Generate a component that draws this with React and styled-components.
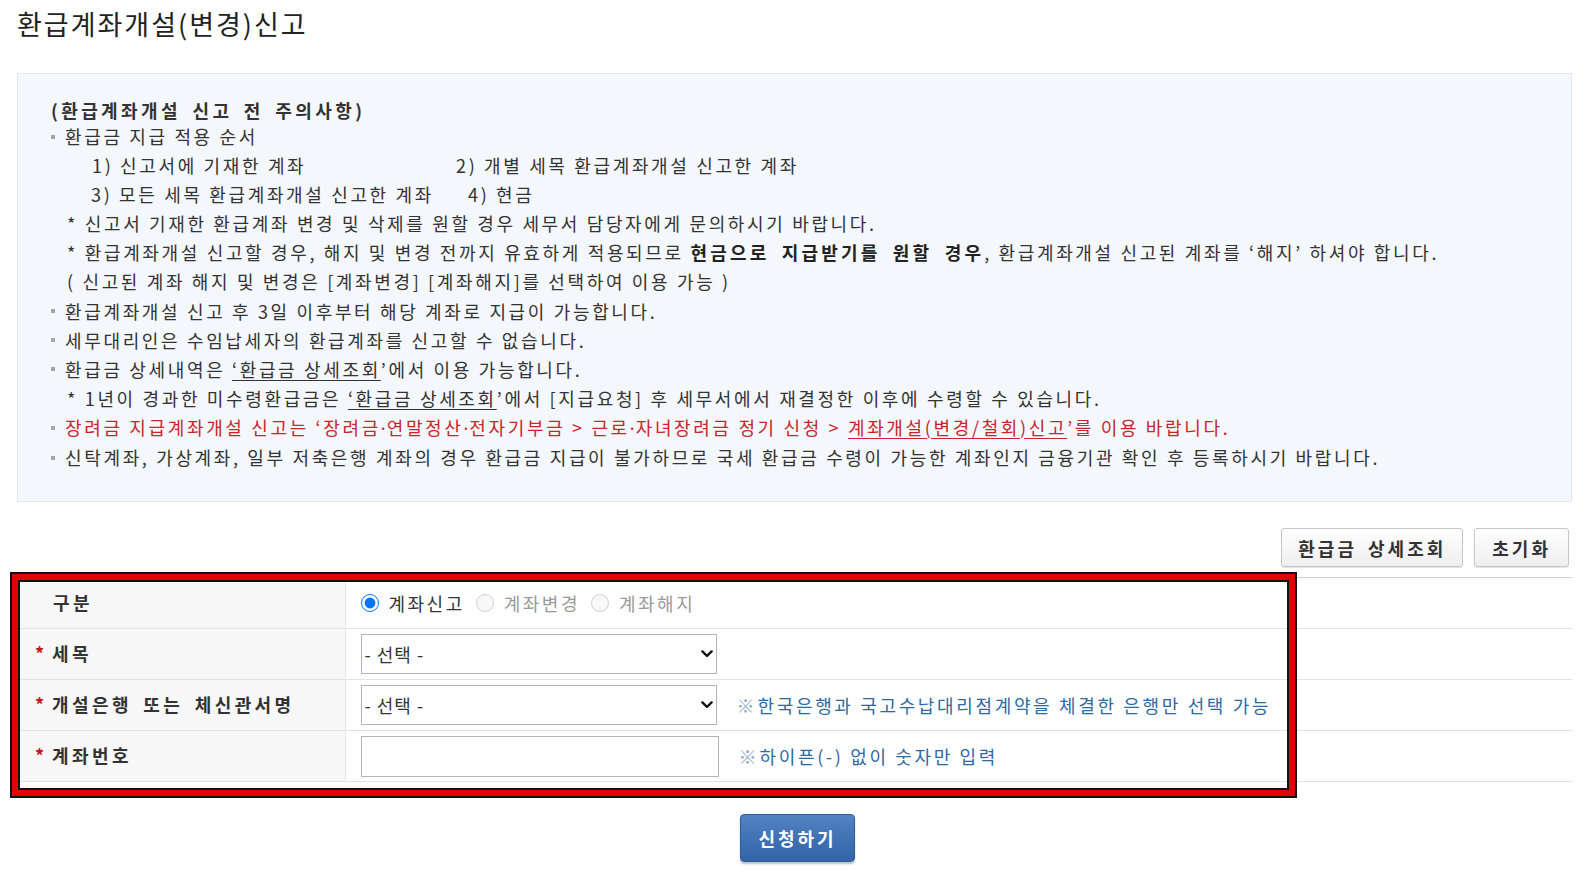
import React from "react";
import styled, { createGlobalStyle } from "styled-components";

const GlobalStyle = createGlobalStyle`
  html, body { margin: 0; padding: 0; background: #fff; }
  body {
    font-family: "Noto Sans CJK KR", "Noto Sans", sans-serif;
    color: #333;
  }
  * { box-sizing: border-box; }
`;

const Page = styled.div`
  width: 1586px;
  padding: 7px 14px 20px 17px;
`;

const Title = styled.h1`
  margin: 0 0 32px;
  font-size: 27px;
  font-weight: 400;
  line-height: 34px;
  letter-spacing: 2px;
  color: #222;
`;

const Notice = styled.section`
  background: #f4f7fb;
  border: 1px solid #e3e8ef;
  padding: 25px 30px 29px 33px;
`;

const NoticeTitle = styled.div`
  font-size: 18px;
  font-weight: 700;
  letter-spacing: 3.4px;
  word-spacing: 4px;
  line-height: 23px;
  color: #333;
`;

const List = styled.ul`
  margin: 0;
  padding: 0;
  list-style: none;
`;

const Item = styled.li`
  font-size: 18px;
  letter-spacing: 2.65px;
  line-height: 29.1px;
  white-space: nowrap;
  color: ${(p) => (p.$red ? "#c9252c" : "#333")};
  padding-left: ${(p) => p.$indent || 0}px;
  display: flex;
  align-items: center;

  &::before {
    content: "";
    display: ${(p) => (p.$bullet ? "inline-block" : "none")};
    width: 4px;
    height: 4px;
    background: #a6a6a6;
    margin-right: 10px;
    flex: none;
  }
`;

const Cell = styled.span`
  display: inline-block;
  width: ${(p) => (p.$w ? `${p.$w}px` : "auto")};
  flex: none;
`;

const Strong = styled.b`
  font-weight: 700;
  letter-spacing: 3.2px;
  word-spacing: 5px;
  color: #222;
`;

const Dot = styled.span`
  font-family: "Noto Sans", sans-serif;
  letter-spacing: 1px;
`;

const Link = styled.span`
  text-decoration: underline;
  text-underline-offset: 3px;
`;

const Toolbar = styled.div`
  display: flex;
  justify-content: flex-end;
  gap: 11px;
  margin-top: 26px;
  padding-right: 3px;
`;

const GrayButton = styled.button`
  height: 39px;
  padding: 0 ${(p) => p.$pad || 18}px;
  border: 1px solid #c6c6c6;
  border-radius: 3px;
  background: linear-gradient(#ffffff, #eeeeee);
  box-shadow: 0 1px 1px rgba(0, 0, 0, 0.12);
  font-family: inherit;
  font-size: 18px;
  font-weight: 700;
  letter-spacing: 3px;
  word-spacing: 4px;
  color: #333;
  cursor: pointer;
`;

const TableWrap = styled.div`
  position: relative;
  margin-top: 10px;
`;

const Table = styled.table`
  width: 100%;
  border-collapse: collapse;
  border-top: 1px solid #d2d2d2;
`;

const Row = styled.tr`
  height: 51px;
  border-bottom: 1px solid #e2e2e2;
`;

const Label = styled.th`
  width: 328px;
  background: #f7f7f7;
  border-right: 1px solid #e8e8e8;
  text-align: left;
  padding: 0 0 3px ${(p) => (p.$req ? 18 : 36)}px;
  font-size: 18px;
  font-weight: 700;
  letter-spacing: 3.4px;
  word-spacing: 4px;
  color: #333;
  white-space: nowrap;
`;

const Star = styled.span`
  display: inline-block;
  width: 17px;
  color: #c4161c;
  letter-spacing: 0;
`;

const Value = styled.td`
  padding: 0 0 0 15px;
`;

const Inline = styled.div`
  display: flex;
  align-items: center;
  gap: ${(p) => p.$gap || 20}px;
`;

const RadioLabel = styled.label`
  display: flex;
  align-items: center;
  gap: 10px;
  font-size: 18px;
  letter-spacing: 2.5px;
  color: ${(p) => (p.$disabled ? "#9a9a9a" : "#333")};
`;

const Radio = styled.input`
  width: 18px;
  height: 18px;
  margin: 0;
`;

const SelectBox = styled.span`
  position: relative;
  display: inline-block;
  width: 356px;
  height: 40px;
`;

const Select = styled.select`
  appearance: none;
  -webkit-appearance: none;
  width: 100%;
  height: 100%;
  border: 1px solid #b4b4b4;
  border-radius: 0;
  background: #fff;
  padding: 0 24px 0 3px;
  font-family: inherit;
  font-size: 18px;
  letter-spacing: 1px;
  color: #333;
`;

const Chevron = styled.svg`
  position: absolute;
  right: 4px;
  top: 50%;
  margin-top: -4px;
  pointer-events: none;
`;

const TextInput = styled.input`
  width: 358px;
  height: 41px;
  border: 1px solid #b4b4b4;
  background: #fff;
  padding: 0 6px;
  font-family: inherit;
  font-size: 18px;
`;

const Hint = styled.span`
  font-size: 18px;
  letter-spacing: 2.65px;
  color: #2d6a9f;
  white-space: nowrap;
`;

const Mark = styled.span`
  color: #8ea9c6;
  margin-right: 3px;
  letter-spacing: 0;
`;

const Highlight = styled.div`
  position: absolute;
  left: -5px;
  top: -3px;
  width: 1283px;
  height: 222px;
  border: 6px solid #e20404;
  box-shadow: 0 0 0 2px #111, inset 0 0 0 2px #111;
  pointer-events: none;
`;

const Actions = styled.div`
  display: flex;
  justify-content: center;
  margin: 32px 0 0 6px;
`;

const Submit = styled.button`
  width: 115px;
  height: 48px;
  border: 1px solid #2f5e9c;
  border-radius: 4px;
  background: linear-gradient(#5282c4, #3263a6);
  box-shadow: 0 2px 2px rgba(0, 0, 0, 0.25);
  color: #fff;
  font-family: inherit;
  font-size: 18px;
  font-weight: 700;
  letter-spacing: 3px;
  cursor: pointer;
`;

function Dropdown() {
  return (
    <SelectBox>
      <Select defaultValue="">
        <option value="">- 선택 -</option>
      </Select>
      <Chevron width="12" height="8" viewBox="0 0 12 8">
        <path d="M1.4 1.4 L6 6 L10.6 1.4" fill="none" stroke="#111" strokeWidth="2.4" strokeLinecap="round" strokeLinejoin="round" />
      </Chevron>
    </SelectBox>
  );
}

export default function App() {
  return (
    <>
      <GlobalStyle />
      <Page>
        <Title>환급계좌개설(변경)신고</Title>

        <Notice>
          <NoticeTitle>(환급계좌개설 신고 전 주의사항)</NoticeTitle>
          <List>
            <Item $bullet>환급금 지급 적용 순서</Item>
            <Item $indent={41}>
              <Cell $w={364}>1) 신고서에 기재한 계좌</Cell>
              <Cell>2) 개별 세목 환급계좌개설 신고한 계좌</Cell>
            </Item>
            <Item $indent={40}>
              <Cell $w={377}>3) 모든 세목 환급계좌개설 신고한 계좌</Cell>
              <Cell>4) 현금</Cell>
            </Item>
            <Item $indent={16}>
              * 신고서 기재한 환급계좌 변경 및 삭제를 원할 경우 세무서 담당자에게 문의하시기 바랍니다.
            </Item>
            <Item $indent={16}>
              <span>
                * 환급계좌개설 신고할 경우, 해지 및 변경 전까지 유효하게 적용되므로{" "}
                <Strong>현금으로 지급받기를 원할 경우</Strong>, 환급계좌개설 신고된 계좌를 ‘해지’ 하셔야 합니다.
              </span>
            </Item>
            <Item $indent={16}>
              ( 신고된 계좌 해지 및 변경은 [계좌변경] [계좌해지]를 선택하여 이용 가능 )
            </Item>
            <Item $bullet>환급계좌개설 신고 후 3일 이후부터 해당 계좌로 지급이 가능합니다.</Item>
            <Item $bullet>세무대리인은 수임납세자의 환급계좌를 신고할 수 없습니다.</Item>
            <Item $bullet>
              <span>
                환급금 상세내역은 <Link>‘환급금 상세조회</Link>’에서 이용 가능합니다.
              </span>
            </Item>
            <Item $indent={16}>
              <span>
                * 1년이 경과한 미수령환급금은 <Link>‘환급금 상세조회</Link>’에서 [지급요청] 후 세무서에서 재결정한 이후에 수령할 수 있습니다.
              </span>
            </Item>
            <Item $bullet $red>
              <span>
                장려금 지급계좌개설 신고는 ‘장려금<Dot>·</Dot>연말정산<Dot>·</Dot>전자기부금 &gt; 근로<Dot>·</Dot>자녀장려금 정기 신청 &gt;{" "}
                <Link>계좌개설(변경/철회)신고</Link>’를 이용 바랍니다.
              </span>
            </Item>
            <Item $bullet>
              신탁계좌, 가상계좌, 일부 저축은행 계좌의 경우 환급금 지급이 불가하므로 국세 환급금 수령이 가능한 계좌인지 금융기관 확인 후 등록하시기 바랍니다.
            </Item>
          </List>
        </Notice>

        <Toolbar>
          <GrayButton $pad={16}>환급금 상세조회</GrayButton>
          <GrayButton $pad={17}>초기화</GrayButton>
        </Toolbar>

        <TableWrap>
          <Table>
            <tbody>
              <Row>
                <Label>구분</Label>
                <Value>
                  <Inline $gap={11}>
                    <RadioLabel>
                      <Radio type="radio" name="kind" defaultChecked />
                      계좌신고
                    </RadioLabel>
                    <RadioLabel $disabled>
                      <Radio type="radio" name="kind" disabled />
                      계좌변경
                    </RadioLabel>
                    <RadioLabel $disabled>
                      <Radio type="radio" name="kind" disabled />
                      계좌해지
                    </RadioLabel>
                  </Inline>
                </Value>
              </Row>
              <Row>
                <Label $req>
                  <Star>*</Star>세목
                </Label>
                <Value>
                  <Dropdown />
                </Value>
              </Row>
              <Row>
                <Label $req>
                  <Star>*</Star>개설은행 또는 체신관서명
                </Label>
                <Value>
                  <Inline>
                    <Dropdown />
                    <Hint>
                      <Mark>※</Mark>한국은행과 국고수납대리점계약을 체결한 은행만 선택 가능
                    </Hint>
                  </Inline>
                </Value>
              </Row>
              <Row>
                <Label $req>
                  <Star>*</Star>계좌번호
                </Label>
                <Value>
                  <Inline>
                    <TextInput type="text" />
                    <Hint>
                      <Mark>※</Mark>하이픈(-) 없이 숫자만 입력
                    </Hint>
                  </Inline>
                </Value>
              </Row>
            </tbody>
          </Table>
          <Highlight />
        </TableWrap>

        <Actions>
          <Submit>신청하기</Submit>
        </Actions>
      </Page>
    </>
  );
}
